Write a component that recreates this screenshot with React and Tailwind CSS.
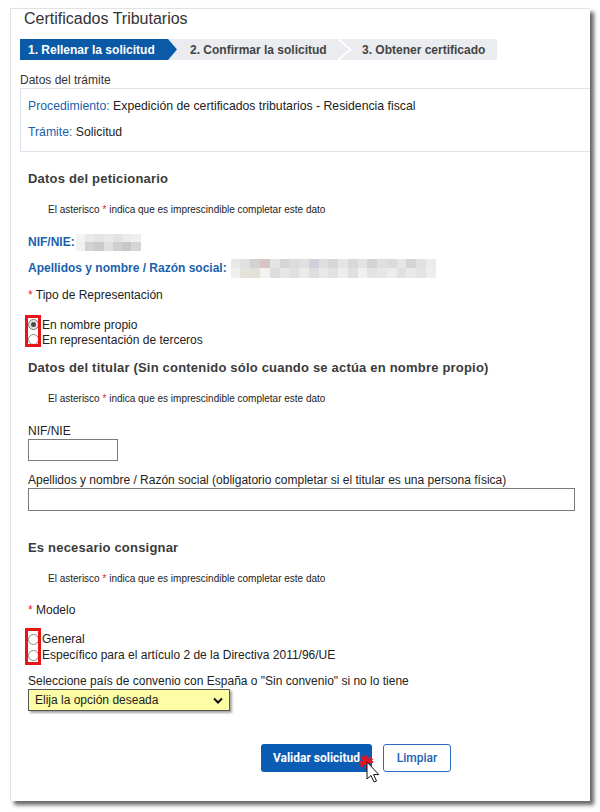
const BLUE = 'text-[#1b5fad]';

const nifTop = ['#f3f3f3', '#e9e9e9', '#e4e4e4', '#e8e8e8', '#e2e2e2', '#ebebeb', '#efefef'];
const nifBottom = ['#f1f1f1', '#d2d2d2', '#cbcbcb', '#dfdfdf', '#cfcfcf', '#c8c8c8', '#d5d5d5'];

const nameTop = [
  '#e8e8e8', '#e0e0e0', '#d2d2d2', '#d8c4c4', '#e4e4e4', '#d5d5d5', '#dbdbdb', '#e2dee2',
  '#d3cedb', '#dedede', '#d6d6d6', '#e5e5e5', '#d9d9d9', '#e3e3e3', '#d4d4d4', '#dfdfdf',
  '#dbdbdb', '#e6e6e6', '#d5d5d5', '#e1e1e1', '#ebebeb',
];
const nameBottom = [
  '#efefef', '#e4e2dc', '#e5e1d9', '#f2f2f2', '#dddddd', '#e6e6e6', '#e0e0e0', '#eaeaea',
  '#dedede', '#e8e8e8', '#e2e2e2', '#ededed', '#dfdfdf', '#f0f0f0', '#e3e3e3', '#e6e6e6',
  '#ececec', '#e1e1e1', '#e9e9e9', '#e4e4e4', '#eeeeee',
];

function Mosaic({ top, bottom, width, height }) {
  return (
    <div className="flex flex-col" style={{ width, height }}>
      {[top, bottom].map((row, r) => (
        <div key={r} className="flex flex-1">
          {row.map((c, i) => (
            <div key={i} className="flex-1" style={{ backgroundColor: c }} />
          ))}
        </div>
      ))}
    </div>
  );
}

function Radio({ checked }) {
  return (
    <span
      className={`w-[11px] h-[11px] rounded-full border flex items-center justify-center shrink-0 ${
        checked ? 'border-[#7a7a7a] bg-[#e3e3e3]' : 'border-[#8c8c8c] bg-white'
      }`}
    >
      {checked && <span className="w-[5px] h-[5px] rounded-full bg-[#4a4a4a]" />}
    </span>
  );
}

function Heading({ children, className = '' }) {
  return (
    <h2 className={`h-[18px] leading-[18px] text-[13px] font-bold tracking-[0.2px] text-[#3b3b3b] ${className}`}>
      {children}
    </h2>
  );
}

function Note({ className = '' }) {
  return (
    <p className={`pl-[20px] h-[14px] leading-[14px] text-[10px] text-[#222] ${className}`}>
      El asterisco <span className="text-[#e3262b]">*</span> indica que es imprescindible completar este dato
    </p>
  );
}

function Steps() {
  return (
    <div className="ml-[9px] mt-[10px] flex h-[21px] w-[477px] bg-[#eaecef] text-[12px] font-bold">
      <div className="w-[157px] h-full bg-[#0b5aa8] text-white flex items-center pl-[8px] [clip-path:polygon(0_0,148px_0,157px_50%,148px_100%,0_100%)]">
        1. Rellenar la solicitud
      </div>
      <div className="w-[161px] h-full flex items-center pl-[13px] text-[#444]">
        2. Confirmar la solicitud
      </div>
      <svg width="14" height="21" viewBox="0 0 14 21" className="shrink-0">
        <polyline points="0,0 12.5,10.5 0,21" fill="none" stroke="#fff" strokeWidth="2" />
      </svg>
      <div className="flex-1 h-full flex items-center pl-[10px] text-[#444]">
        3. Obtener certificado
      </div>
    </div>
  );
}

function Cursor() {
  return (
    <svg
      width="24"
      height="32"
      viewBox="0 0 24 32"
      className="absolute left-[98px] top-[11px] pointer-events-none"
    >
      <g stroke="#e8141b" strokeWidth="1.8" strokeLinecap="round">
        <line x1="7" y1="0.5" x2="7" y2="13.5" />
        <line x1="0.5" y1="7" x2="13.5" y2="7" />
        <line x1="2.3" y1="2.3" x2="11.7" y2="11.7" />
        <line x1="11.7" y1="2.3" x2="2.3" y2="11.7" />
        <line x1="4.5" y1="1" x2="9.5" y2="13" />
        <line x1="1" y1="9.5" x2="13" y2="4.5" />
      </g>
      <path
        d="M8 7 L8 24 L12 20.5 L15 27 L17.5 26 L14.6 19.6 L19.8 19.6 Z"
        fill="#fff"
        stroke="#111"
        strokeWidth="1"
        strokeLinejoin="round"
      />
    </svg>
  );
}

export default function App() {
  return (
    <div className="min-h-screen bg-white pt-[8px] pl-[10px]">
      <div className="w-[580px] h-[793px] bg-white border-l border-t border-[#e2e2e2] shadow-[4px_4px_4px_rgba(0,0,0,0.6)] overflow-hidden font-['Liberation_Sans',Arial,sans-serif] text-[12px] text-[#222]">
        <h1 className="pl-[13px] h-[20px] leading-[20px] text-[16px] text-[#333]">
          Certificados Tributarios
        </h1>

        <Steps />

        <p className="ml-[9px] mt-[12px] h-[16px] leading-[16px] text-[#333]">Datos del trámite</p>
        <div className="ml-[9px] h-[64px] border border-r-0 border-[#dce3ea] pl-[7px] pt-[9px] flex flex-col gap-[10px]">
          <p className="h-[16px] leading-[16px] text-[12.25px]">
            <span className={BLUE}>Procedimiento:</span> Expedición de certificados tributarios - Residencia fiscal
          </p>
          <p className="h-[16px] leading-[16px] text-[12.25px]">
            <span className={BLUE}>Trámite:</span> Solicitud
          </p>
        </div>

        <div className="pl-[17px]">
          {/* Datos del peticionario */}
          <Heading className="mt-[18px]">Datos del peticionario</Heading>
          <Note className="mt-[15px]" />

          <div className="mt-[16px] h-[18px] flex items-center gap-[1px]">
            <span className={`font-bold ${BLUE}`}>NIF/NIE:</span>
            <Mosaic top={nifTop} bottom={nifBottom} width={65} height={17} />
          </div>
          <div className="mt-[8px] h-[18px] flex items-center gap-[4px]">
            <span className={`font-bold ${BLUE}`}>Apellidos y nombre / Razón social:</span>
            <Mosaic top={nameTop} bottom={nameBottom} width={205} height={19} />
          </div>

          <p className="mt-[10px] h-[16px] leading-[16px]">
            <span className="text-[#e3262b]">*</span> Tipo de Representación
          </p>

          <div className="relative mt-[14px]">
            <label className="h-[15px] flex items-center gap-[3px]">
              <Radio checked />
              En nombre propio
            </label>
            <label className="h-[15px] flex items-center gap-[3px]">
              <Radio />
              En representación de terceros
            </label>
            <div className="absolute left-[-3px] top-[-2px] w-[16px] h-[32px] border-[3px] border-[#e8161b]" />
          </div>

          {/* Datos del titular */}
          <Heading className="mt-[12px]">
            Datos del titular (Sin contenido sólo cuando se actúa en nombre propio)
          </Heading>
          <Note className="mt-[15px]" />

          <p className="mt-[17px] h-[16px] leading-[16px]">NIF/NIE</p>
          <div className="w-[90px] h-[22px] border border-[#7a7a7a] bg-white" />

          <p className="mt-[11px] h-[16px] leading-[16px]">
            Apellidos y nombre / Razón social (obligatorio completar si el titular es una persona física)
          </p>
          <div className="w-[547px] h-[23px] border border-[#7a7a7a] bg-white" />

          {/* Es necesario consignar */}
          <Heading className="mt-[28px]">Es necesario consignar</Heading>
          <Note className="mt-[15px]" />

          <p className="mt-[16px] h-[16px] leading-[16px]">
            <span className="text-[#e3262b]">*</span> Modelo
          </p>

          <div className="relative mt-[13px]">
            <label className="h-[16px] flex items-center gap-[3px]">
              <Radio />
              General
            </label>
            <label className="h-[16px] flex items-center gap-[3px]">
              <Radio />
              Específico para el artículo 2 de la Directiva 2011/96/UE
            </label>
            <div className="absolute left-[-3px] top-[-3px] w-[16px] h-[37px] border-[3px] border-[#e8161b]" />
          </div>

          <p className="mt-[11px] h-[14px] leading-[14px]">
            Seleccione país de convenio con España o "Sin convenio" si no lo tiene
          </p>
          <div className="mt-[1px] w-[202px] h-[22px] border border-[#555] bg-[#fdfda6] shadow-[2px_2px_2px_rgba(0,0,0,0.35)] flex items-center justify-between pl-[6px] pr-[6px]">
            <span>Elija la opción deseada</span>
            <svg width="10" height="7" viewBox="0 0 10 7">
              <polyline points="1,1.5 5,5.5 9,1.5" fill="none" stroke="#111" strokeWidth="2" />
            </svg>
          </div>

          <div className="mt-[33px] ml-[233px] flex gap-[11px]">
            <div className="relative">
              <button className="w-[111px] h-[28px] rounded-[3px] bg-[#0b5cb5] text-white text-[12px] font-bold font-['Roboto',Arial,sans-serif]">
                Validar solicitud
              </button>
              <Cursor />
            </div>
            <button className="w-[68px] h-[28px] rounded-[3px] border border-[#2b6cc0] bg-white text-[#1d5fb0] text-[12px] font-medium font-['Roboto',Arial,sans-serif]">
              Limpiar
            </button>
          </div>
        </div>
      </div>
    </div>
  );
}
